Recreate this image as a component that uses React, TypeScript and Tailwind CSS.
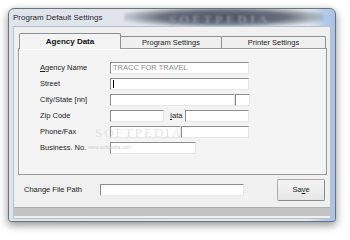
import React from "react";

const font = { fontFamily: '"Liberation Sans", Arial, sans-serif' };

function Field({ w, children, className = "" }: { w: string; children?: React.ReactNode; className?: string }) {
  return (
    <div
      className={`${w} h-[12px] bg-white border border-t-[#8d8d8d] border-l-[#8d8d8d] border-b-[#e6e6e6] border-r-[#e6e6e6] flex items-center overflow-hidden ${className}`}
    >
      {children}
    </div>
  );
}

function Row({ label, children }: { label: React.ReactNode; children: React.ReactNode }) {
  return (
    <div className="flex items-center h-[12px]">
      <div className="w-[70px] text-[7.5px] leading-none text-[#1a1a1a] whitespace-nowrap">{label}</div>
      <div className="flex items-center">{children}</div>
    </div>
  );
}

export default function App() {
  return (
    <div className="w-[350px] h-[240px] bg-white pl-[8px] pt-[8px] overflow-hidden" style={font}>
      <div className="relative w-[328px] h-[214px] rounded-t-[6px] rounded-b-[3px] border border-[#6b737c] bg-[linear-gradient(to_right,#dfe4ea_0%,#e2e7ed_92%,#b3cbe8_97%,#a6c3e6_100%)] shadow-[0_3px_8px_rgba(0,0,0,0.45)] flex flex-col">
        {/* title bar */}
        <div className="relative h-[17px] flex items-center pl-[4px] overflow-hidden">
          <div className="absolute left-[115px] -top-[2px] w-[200px] h-[20px] bg-[radial-gradient(ellipse_at_center,#48505a_0%,#68717c_45%,rgba(200,208,216,0)_78%)] blur-[1px]" />
          <div className="absolute left-[160px] top-[1px] text-[13px] font-bold tracking-[3px] text-[#8b949e] blur-[1px] [font-family:'Liberation_Serif',serif]">
            SOFTPEDIA
          </div>
          <span className="relative text-[8px] text-[#1e2630] leading-none">Program Default Settings</span>
        </div>
        {/* client */}
        <div className="relative mx-[4px] h-[193px] bg-[#f0f0f0] border border-[#b7c1cc] flex flex-col">
          {/* tab control */}
          <div className="ml-[4px] mt-[6px] w-[309px]">
            <div className="flex items-end h-[15px] relative z-10">
              <div className="ml-[1px] w-[102px] h-[16px] -mb-[1px] bg-[#f4f4f4] border border-b-0 border-[#8e8f8f] rounded-t-[2px] flex items-center justify-center text-[8px] font-bold text-[#111]">
                Agency Data
              </div>
              <div className="w-[102px] -ml-[1px] h-[12px] bg-[#efefef] border border-b-0 border-[#8e8f8f] rounded-t-[2px] flex items-center justify-center text-[7.5px] text-[#222]">
                Program Settings
              </div>
              <div className="w-[105px] -ml-[1px] h-[12px] bg-[#efefef] border border-b-0 border-[#8e8f8f] rounded-t-[2px] flex items-center justify-center text-[7.5px] text-[#222]">
                Printer Settings
              </div>
            </div>
            <div className="relative h-[127px] border border-[#9a9a9a] bg-[#f4f4f4] shadow-[inset_1px_1px_0_#ffffff] pt-[13px] pl-[21px] flex flex-col gap-[4px]">
              <Row label={<><span className="underline">A</span>gency Name</>}>
                <Field w="w-[139px]">
                  <span className="pl-[2px] text-[7.5px] leading-none text-[#8a8a8a]">TRACC FOR TRAVEL</span>
                </Field>
              </Row>
              <Row label="Street">
                <Field w="w-[139px]">
                  <div className="ml-[2px] w-[1px] h-[8px] bg-[#000]" />
                </Field>
              </Row>
              <Row label="City/State [nn]">
                <Field w="w-[125px]" />
                <Field w="w-[15px]" className="border-l-[#7a7a7a]" />
              </Row>
              <Row label="Zip Code">
                <Field w="w-[54px]" />
                <span className="ml-[6px] w-[15px] text-[7.5px] leading-none text-[#1a1a1a]">
                  <span className="underline">I</span>ata
                </span>
                <Field w="w-[64px]" />
              </Row>
              <Row label="Phone/Fax">
                <Field w="w-[71px]" />
                <Field w="w-[68px]" className="border-l-[#7a7a7a]" />
              </Row>
              <Row label="Business. No.">
                <Field w="w-[86px]" />
              </Row>
              <div className="pointer-events-none absolute left-[76px] top-[74px] text-[13px] tracking-[2px] text-[#d8d8d8] opacity-70 [font-family:'Liberation_Serif',serif]">
                SOFTPEDIA
              </div>
              <div className="pointer-events-none absolute left-[69px] top-[96px] text-[5px] leading-none text-[#cfcfcf]">
                www.softpedia.com
              </div>
            </div>
          </div>
          {/* bottom row */}
          <div className="mt-[4px] h-[22px] flex items-center pl-[10px]">
            <div className="w-[76px] text-[7.5px] leading-none text-[#1a1a1a]">Change File Path</div>
            <Field w="w-[144px]" />
            <div className="ml-[33px] w-[48px] h-[22px] bg-[linear-gradient(#f4f4f4,#e6e6e6)] border border-[#acacac] border-b-[#8a8a8a] border-r-[#8a8a8a] rounded-[2px] flex items-center justify-center text-[7.5px] text-[#1a1a1a]">
              Sa<span className="underline">v</span>e
            </div>
          </div>
          <div className="mt-[6px] h-[9px] bg-[#c4c4c4] border-t border-[#b0b0b0]" />
        </div>
      </div>
    </div>
  );
}
